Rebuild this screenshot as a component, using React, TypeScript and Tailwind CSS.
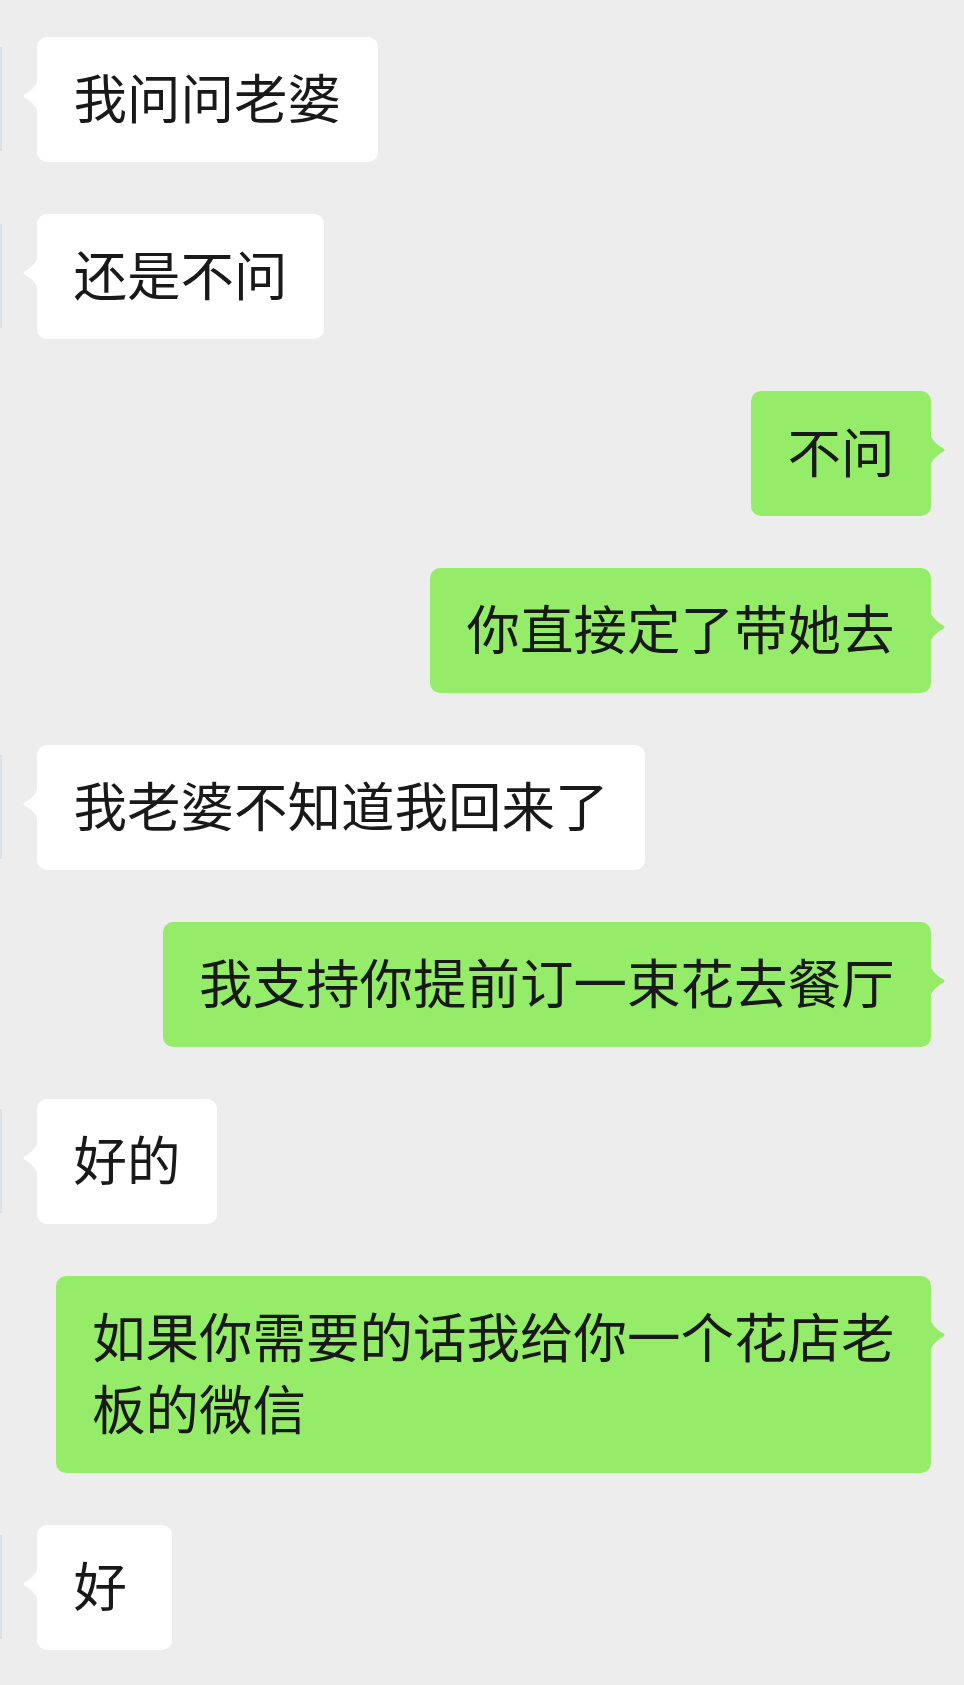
type Msg = {
  side: "left" | "right";
  lines: string[];
};

const messages: Msg[] = [
  { side: "left", lines: ["我问问老婆"] },
  { side: "left", lines: ["还是不问"] },
  { side: "right", lines: ["不问"] },
  { side: "right", lines: ["你直接定了带她去"] },
  { side: "left", lines: ["我老婆不知道我回来了"] },
  { side: "right", lines: ["我支持你提前订一束花去餐厅"] },
  { side: "left", lines: ["好的"] },
  { side: "right", lines: ["如果你需要的话我给你一个花店老", "板的微信"] },
  { side: "left", lines: ["好"] },
];

function Tail({ side }: { side: "left" | "right" }) {
  const fill = side === "left" ? "#ffffff" : "#95ec69";
  return (
    <svg
      width="16"
      height="32"
      viewBox="0 0 16 32"
      className={`absolute top-[43px] ${side === "left" ? "-left-[15px] -scale-x-100" : "-right-[15px]"}`}
    >
      <path d="M0 0 Q 3 9 13.5 14.5 Q 15.5 16 13.5 17.5 Q 3 23 0 32 Z" fill={fill} />
    </svg>
  );
}

function Bubble({ m }: { m: Msg }) {
  return (
    <div
      className={`relative min-w-[135px] rounded-[10px] px-[36.5px] pt-[23px] pb-[30px] text-[53.5px] leading-[72px] whitespace-nowrap text-[#191919] ${
        m.side === "left" ? "bg-white" : "bg-[#95ec69]"
      }`}
    >
      <Tail side={m.side} />
      {m.lines.map((l, i) => (
        <div key={i}>{l}</div>
      ))}
    </div>
  );
}

export default function App() {
  return (
    <div
      className="min-h-[1685px] w-full bg-[#ededed] pt-[37px] pb-[35px] flex flex-col gap-[52px]"
      style={{ fontFamily: '"Noto Sans CJK SC", "Noto Sans", sans-serif' }}
    >
      {messages.map((m, i) =>
        m.side === "left" ? (
          <div key={i} className="flex items-start">
            {/* cut-off avatar edge */}
            <div className="w-[2px] h-[104px] mt-[10px] bg-[#dbe1e4]" />
            <div className="ml-[35px]">
              <Bubble m={m} />
            </div>
          </div>
        ) : (
          <div key={i} className="flex justify-end pr-[33px]">
            <Bubble m={m} />
          </div>
        )
      )}
    </div>
  );
}
